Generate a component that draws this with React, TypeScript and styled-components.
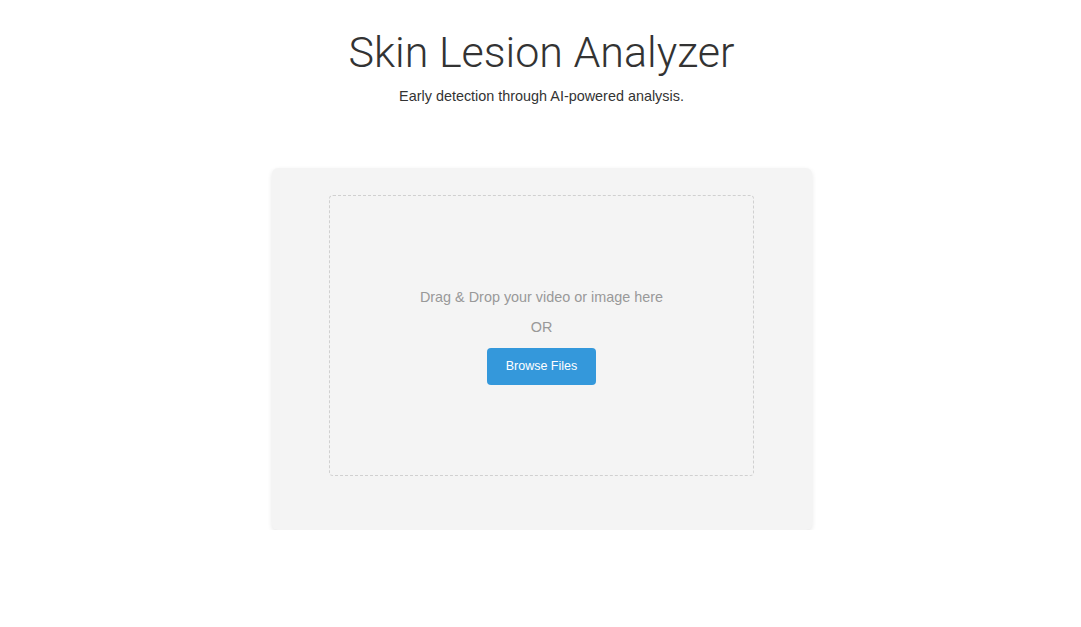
import React from "react";
import styled, { createGlobalStyle } from "styled-components";

const Global = createGlobalStyle`
  html, body { margin: 0; padding: 0; background: #ffffff; }
  body { font-family: "Liberation Sans", Arial, sans-serif; color: #333; }
`;

const Page = styled.main`
  display: flex;
  flex-direction: column;
  align-items: center;
  padding: 24px 0 0 2px;
`;

const Header = styled.header`
  display: flex;
  flex-direction: column;
  align-items: center;
`;

const Title = styled.h1`
  margin: 0;
  font-family: Roboto, "Liberation Sans", sans-serif;
  font-weight: 300;
  font-size: 43px;
  line-height: 56px;
  color: #333;
`;

const Subtitle = styled.p`
  margin: 6px 0 0;
  font-size: 14.4px;
  line-height: 20px;
  color: #333;
`;

const Card = styled.section`
  margin-top: 62px;
  width: 540px;
  box-sizing: border-box;
  background: #f4f4f4;
  border-radius: 6px;
  box-shadow: 0 2px 5px rgba(0, 0, 0, 0.1);
  padding: 27px 0 54px;
  display: flex;
  justify-content: center;
`;

const DropZone = styled.div`
  width: 425px;
  height: 281px;
  box-sizing: border-box;
  border: 1px dashed #d0d0d0;
  border-radius: 4px;
  display: flex;
  flex-direction: column;
  align-items: center;
  justify-content: center;
  color: #999;
  font-size: 14.4px;
`;

const Hint = styled.p`
  margin: 0;
  line-height: 20px;
`;

const Or = styled.p`
  margin: 10px 0 0;
  line-height: 20px;
`;

const BrowseButton = styled.button`
  margin-top: 11px;
  width: 109px;
  height: 37px;
  border: none;
  border-radius: 4px;
  background: #3498db;
  color: #fff;
  font-family: "Liberation Sans", Arial, sans-serif;
  font-size: 12.5px;
  cursor: pointer;
`;

export default function App() {
  return (
    <>
      <Global />
      <Page>
        <Header>
          <Title>Skin Lesion Analyzer</Title>
          <Subtitle>Early detection through AI-powered analysis.</Subtitle>
        </Header>
        <Card>
          <DropZone>
            <Hint>Drag &amp; Drop your video or image here</Hint>
            <Or>OR</Or>
            <BrowseButton>Browse Files</BrowseButton>
          </DropZone>
        </Card>
      </Page>
    </>
  );
}
